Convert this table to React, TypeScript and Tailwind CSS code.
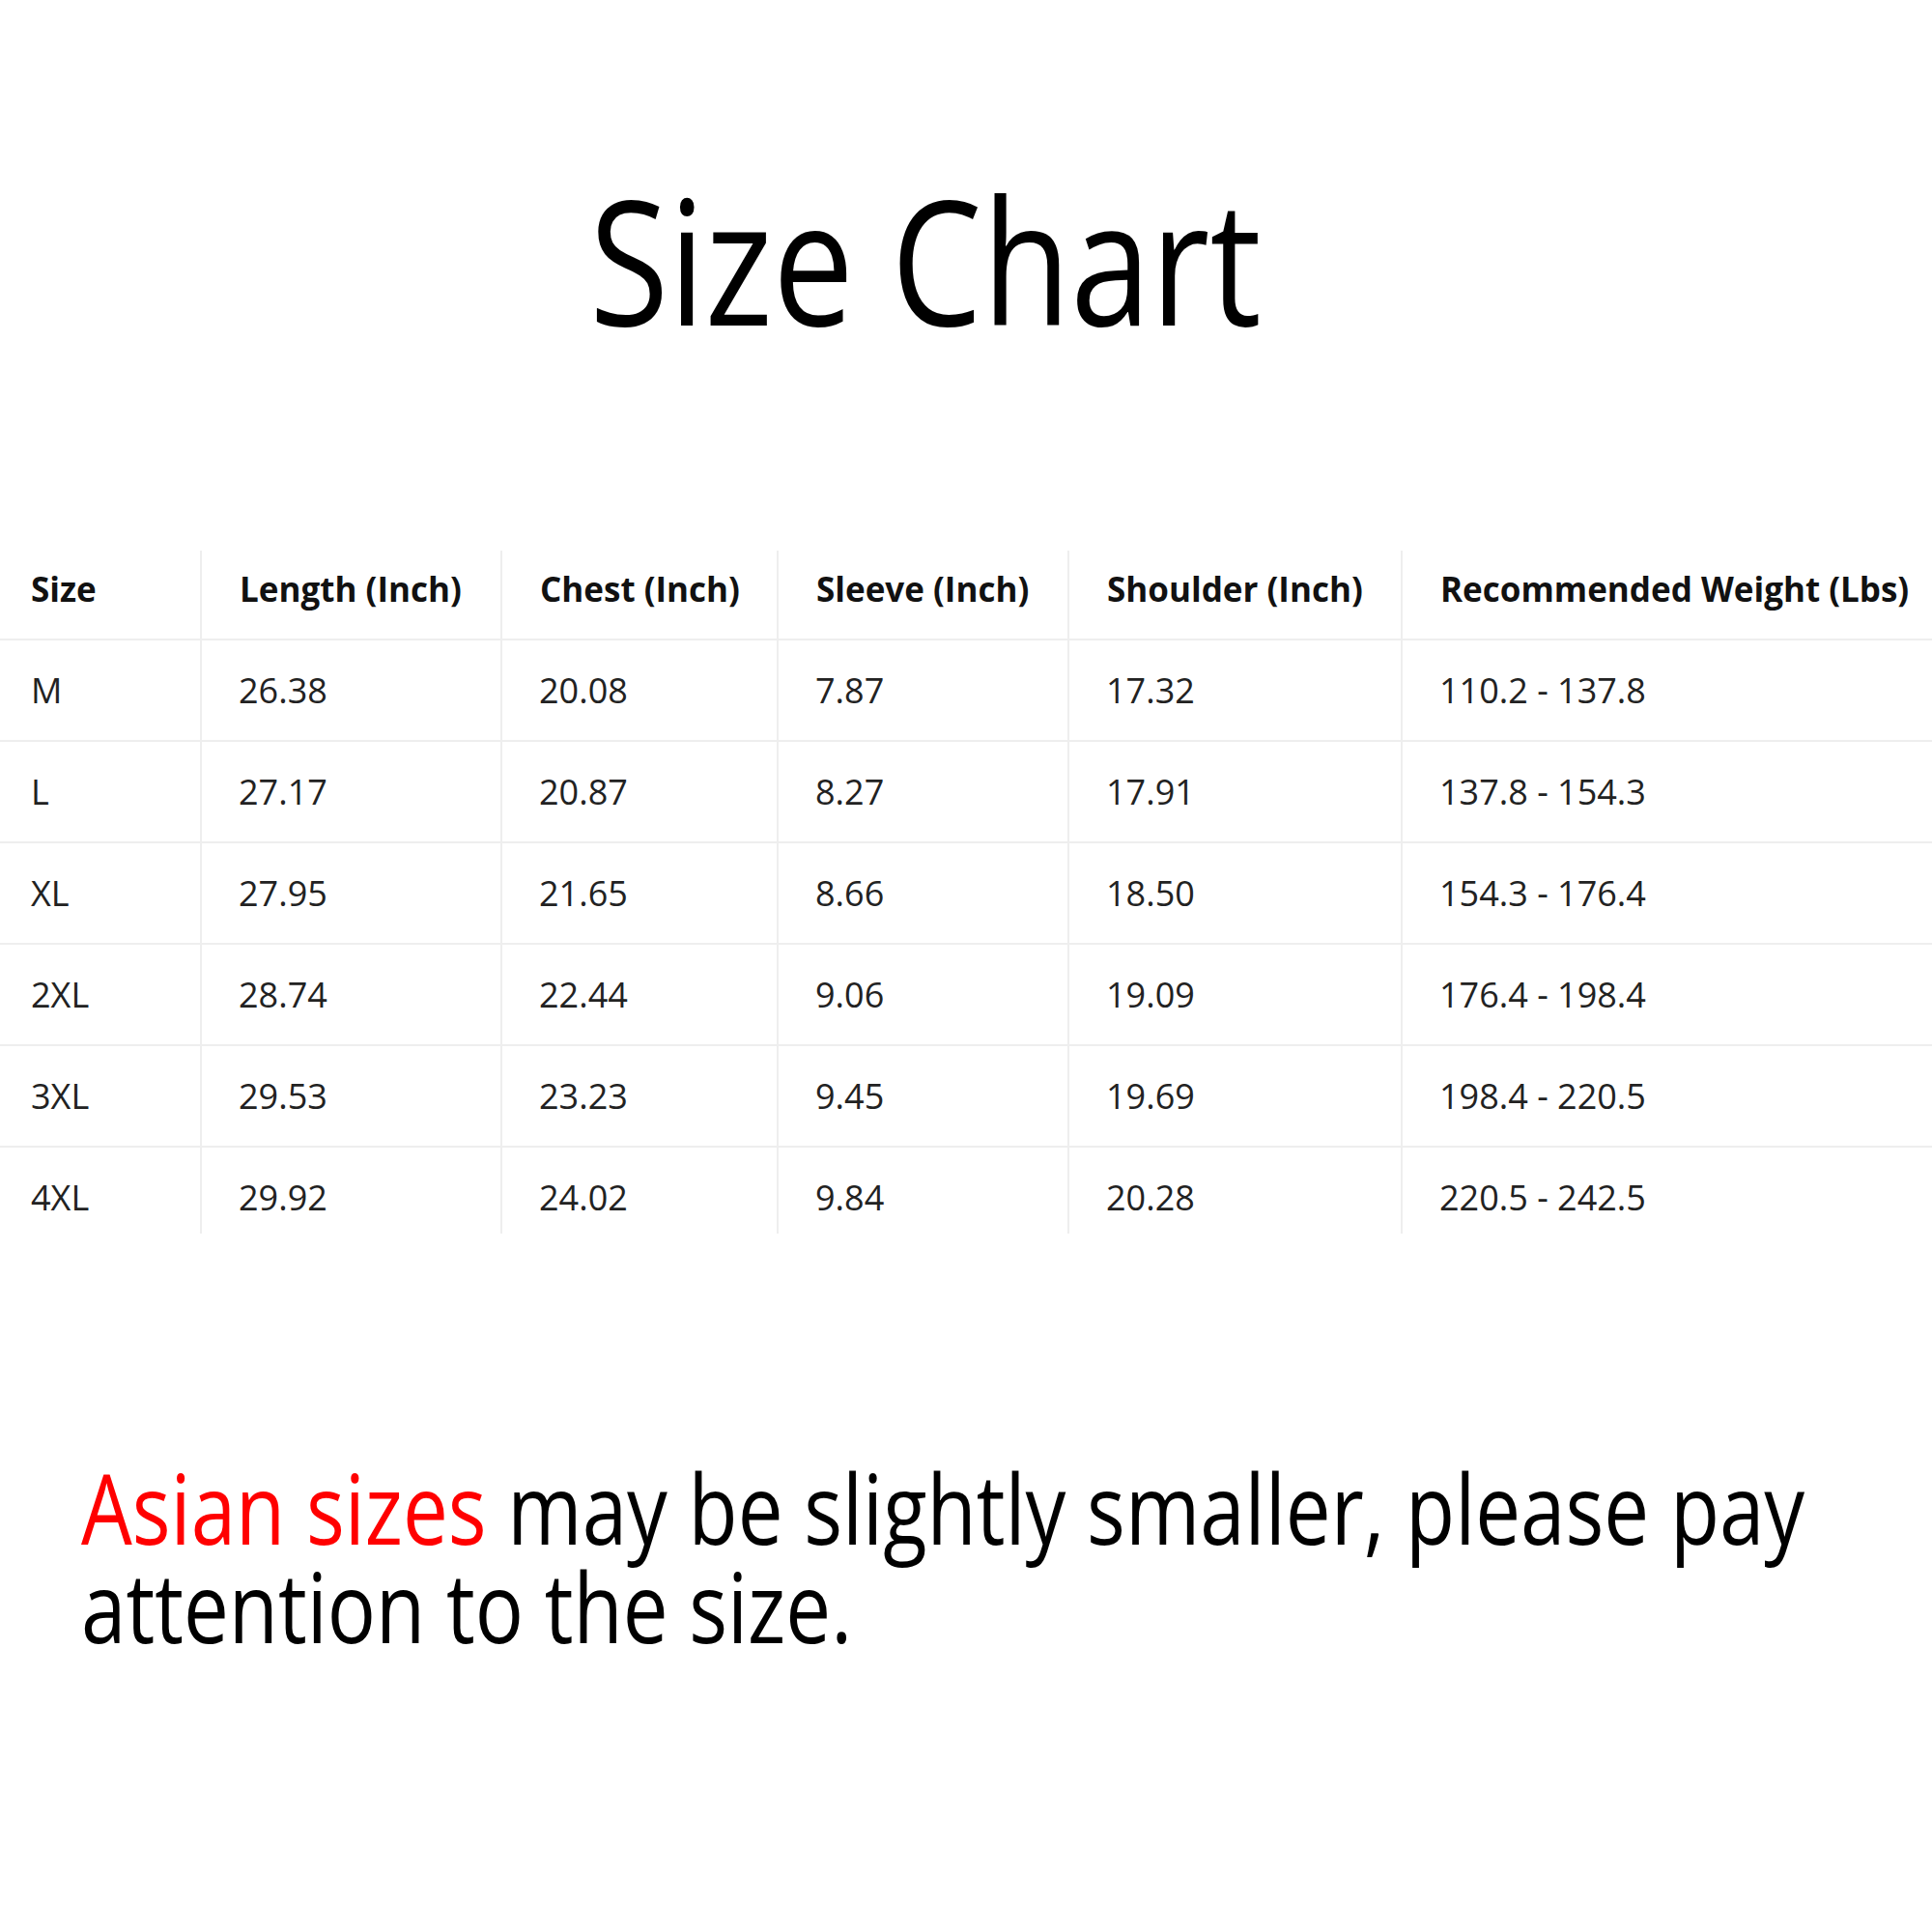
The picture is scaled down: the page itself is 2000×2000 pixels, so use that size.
import React from "react";

const headers = [
  "Size",
  "Length (Inch)",
  "Chest (Inch)",
  "Sleeve (Inch)",
  "Shoulder (Inch)",
  "Recommended Weight (Lbs)",
];

const rows = [
  ["M", "26.38", "20.08", "7.87", "17.32", "110.2 - 137.8"],
  ["L", "27.17", "20.87", "8.27", "17.91", "137.8 - 154.3"],
  ["XL", "27.95", "21.65", "8.66", "18.50", "154.3 - 176.4"],
  ["2XL", "28.74", "22.44", "9.06", "19.09", "176.4 - 198.4"],
  ["3XL", "29.53", "23.23", "9.45", "19.69", "198.4 - 220.5"],
  ["4XL", "29.92", "24.02", "9.84", "20.28", "220.5 - 242.5"],
];

export default function App() {
  return (
    <div
      className="w-[2000px] h-[2000px] bg-white flex flex-col"
      style={{ fontFamily: '"Open Sans", "Noto Sans", sans-serif' }}
    >
      <div className="h-[570px] flex justify-center pr-[84px] pt-[148px]">
        <h1 className="text-[180px] leading-[240px] font-normal text-black whitespace-nowrap scale-x-[0.83] origin-center">
          Size Chart
        </h1>
      </div>
      <div className="grid grid-cols-[207px_311px_286px_301px_345px_550px]">
        {headers.map((h, i) => (
          <div
            key={h}
            className={`h-[93px] flex items-center pb-[12px] border-b-2 border-[#eeeeee] ${i === 0 ? "pl-[32px]" : "pl-[39px] border-l-2"} text-[35px] leading-[48px] font-bold text-[#111111] whitespace-nowrap`}
          >
            {h}
          </div>
        ))}
        {rows.map((r, ri) =>
          r.map((c, ci) => (
            <div
              key={ri + "-" + ci}
              className={`${ri === rows.length - 1 ? "h-[89px] items-start pt-[28px]" : "h-[105px] items-center border-b-2"} flex border-[#eeeeee] ${ci === 0 ? "pl-[32px]" : "pl-[38px] border-l-2"} text-[36px] leading-[48px] text-[#222222] whitespace-nowrap`}
            >
              {c}
            </div>
          ))
        )}
      </div>
      <div className="pl-[84px] pt-[232px] text-[100px] leading-[102px] text-black">
        <div className="whitespace-nowrap scale-x-[0.835] origin-left">
          <span className="text-[#ff0000]">Asian sizes</span> may be slightly smaller, please pay
        </div>
        <div className="whitespace-nowrap scale-x-[0.835] origin-left">attention to the size.</div>
      </div>
    </div>
  );
}
